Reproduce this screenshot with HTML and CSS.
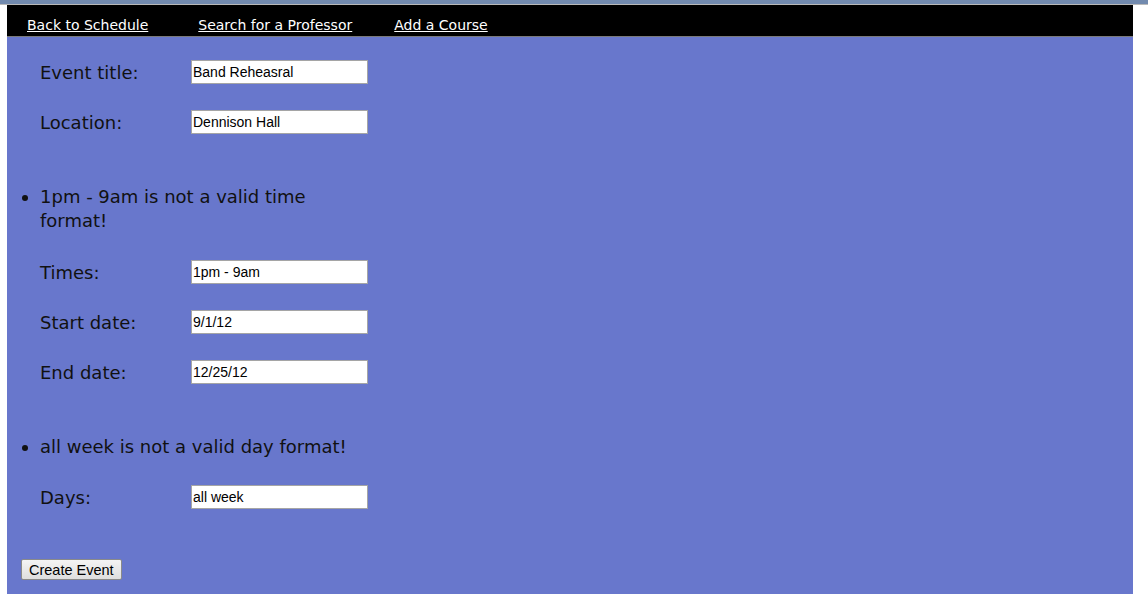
FILE: index.html
```html
<!DOCTYPE html>
<html>
<head>
<meta charset="utf-8">
<title>Create Event</title>
<link rel="stylesheet" href="styles.css">
</head>
<body>
<div class="topstrip"></div>
<div class="page">
  <nav class="nav">
    <a href="#" class="nav-link">Back to Schedule</a>
    <a href="#" class="nav-link nav-second">Search for a Professor</a>
    <a href="#" class="nav-link nav-third">Add a Course</a>
  </nav>
  <form class="form">
    <div class="row"><label class="label">Event title:</label><input class="field" type="text" value="Band Reheasral"></div>
    <div class="row"><label class="label">Location:</label><input class="field" type="text" value="Dennison Hall"></div>
    <ul class="errors"><li>1pm - 9am is not a valid time format!</li></ul>
    <div class="row row-after-error"><label class="label">Times:</label><input class="field" type="text" value="1pm - 9am"></div>
    <div class="row"><label class="label">Start date:</label><input class="field" type="text" value="9/1/12"></div>
    <div class="row"><label class="label">End date:</label><input class="field" type="text" value="12/25/12"></div>
    <ul class="errors"><li>all week is not a valid day format!</li></ul>
    <div class="row row-after-error2"><label class="label">Days:</label><input class="field" type="text" value="all week"></div>
    <button type="button" class="btn">Create Event</button>
  </form>
</div>
</body>
</html>
```
FILE: styles.css
```css
html, body {
  margin: 0;
  padding: 0;
  background: #ffffff;
}
body {
  font-family: "DejaVu Sans", Verdana, sans-serif;
  color: #111111;
}
.topstrip {
  height: 4px;
  background: #728aae;
  border-bottom: 1px solid #b9b9b9;
}
.page {
  margin: 0 15px 0 7px;
  background: #6877cc;
}
.nav {
  display: flex;
  align-items: center;
  height: 32px;
  background: #000000;
  border-bottom: 1px solid #7a7a7a;
  padding-left: 20px;
  padding-top: 8px;
  box-sizing: border-box;
}
.nav-link {
  color: #ffffff;
  font-size: 14px;
  text-decoration: underline;
}
.nav-second { margin-left: 50px; }
.nav-third { margin-left: 42px; }
.form {
  padding: 10px 0 14px 0;
  width: 370px;
}
.row {
  display: flex;
  align-items: center;
  height: 50px;
  padding-left: 33px;
}
.label {
  flex: 0 0 151px;
  font-size: 18px;
  color: #111111;
}
.field {
  flex: 0 0 177px;
  box-sizing: border-box;
  width: 177px;
  height: 24px;
  margin: 0;
  padding: 1px 1px;
  border: 1px solid #a5a5a5;
  background: #ffffff;
  font-family: "Liberation Sans", Arial, sans-serif;
  font-size: 14px;
  color: #000000;
  outline: none;
}
.errors {
  margin: 38px 0 0 0;
  padding-left: 33px;
  font-size: 18px;
  line-height: 24px;
  color: #111111;
}
.row-after-error { margin-top: 14px; }
.row-after-error2 { margin-top: 13px; }
.btn {
  margin: 37px 0 0 14px;
  height: 21px;
  padding: 0 7px;
  font-family: "Liberation Sans", Arial, sans-serif;
  font-size: 14.5px;
  color: #000000;
  background: linear-gradient(#f4f4f4, #dedede);
  border: 1px solid #8a8a8a;
  border-radius: 2px;
}
```
